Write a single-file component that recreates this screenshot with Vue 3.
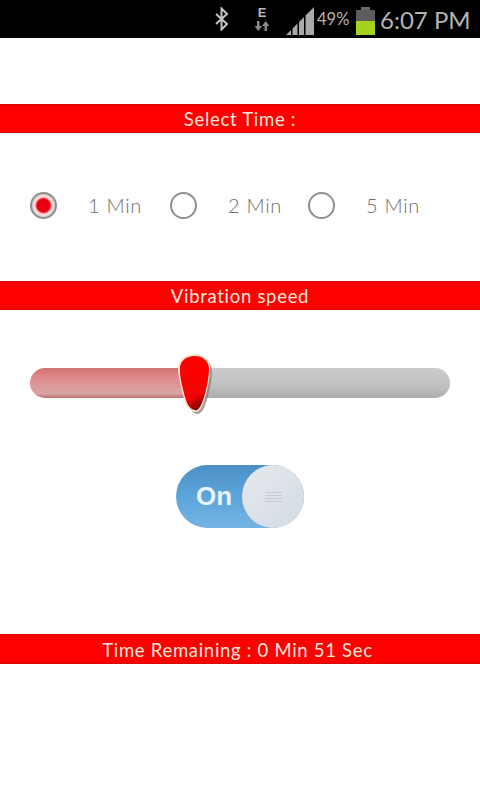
<script setup>
import { ref } from 'vue';

const TIMES = [1, 2, 5];
const selected = ref(1);
const isOn = ref(true);
</script>

<template>
  <div class="screen">
    <div class="status">
      <svg class="bt" width="16" height="24" viewBox="0 0 16 24" fill="none" stroke="#c4c4c4" stroke-width="2">
        <path d="M2 7l11 10-5.500 5.500V1.500L13 7 2 17" />
      </svg>
      <div class="data">
        <span class="data-e">E</span>
        <svg width="16" height="10" viewBox="0 0 16 10" fill="#8a8a8a">
          <path d="M3 0h2.500v5H8L4.250 10 .5 5H3zM10.500 10h2.500V5h2.500L11.750 0 8 5h2.500z" />
        </svg>
      </div>
      <svg class="signal" width="29" height="29" viewBox="0 0 29 29" fill="#aaa">
        <path d="M0 29l5-5v5zM6.500 29V22.500l5-5V29zM13 29V16l5-5v18zM19.500 29V9.500L28 1v28z" />
      </svg>
      <span class="pct">49%</span>
      <div class="battery">
        <i class="battery-cap"></i>
        <i class="battery-empty"></i>
        <i class="battery-full"></i>
      </div>
      <span class="clock">6:07 PM</span>
    </div>

    <div class="band select-band">Select Time :</div>

    <div class="radios">
      <label v-for="t in TIMES" :key="t" class="radio" @click="selected = t">
        <span class="dot" :class="{ active: selected === t }"></span>
        <span class="radio-label">{{ t }} Min</span>
      </label>
    </div>

    <div class="band speed-band">Vibration speed</div>

    <div class="slider">
      <div class="track-fill"></div>
      <div class="track-rest"></div>
      <svg class="thumb" width="38" height="62" viewBox="0 0 38 62">
        <defs>
          <linearGradient id="thumbRed" x1="0.35" y1="0" x2="0.65" y2="1">
            <stop offset="0" stop-color="#ff0000" />
            <stop offset="0.72" stop-color="#f50000" />
            <stop offset="1" stop-color="#6e0000" />
          </linearGradient>
        </defs>
        <path d="M8 20C8 10 14 5 22 5c9 0 14 6 14 13 0 11-4 28-8 37-2 4-4 6-7 6-4 0-8-5-10-13C9 40 8 28 8 20z" fill="#7f7f72" opacity=".7" />
        <path d="M2 18C1 7 9 1 19 1c10 0 15 7 15 15 0 11-4 28-8 37-2 4-4 6-7 6-5 0-9-5-11-13C6 38 3 26 2 18z" fill="#fbe3cc" />
        <path d="M4 18C3 8 10 3 19 3c9 0 14 6 14 13 0 10-4 28-8 36-2 4-4 6-6 5-4 0-8-5-10-13C7 36 4 26 4 18z" fill="url(#thumbRed)" />
      </svg>
    </div>

    <div class="toggle-row">
      <button class="toggle" type="button" @click="isOn = !isOn">
        <span class="toggle-text">{{ isOn ? 'On' : 'Off' }}</span>
        <span class="knob">
          <i></i><i></i><i></i><i></i>
        </span>
      </button>
    </div>

    <div class="band remain-band">Time Remaining : 0 Min 51 Sec</div>
  </div>
</template>

<style>
html,
body {
  margin: 0;
  background: #fff;
}
</style>

<style scoped>
.screen {
  width: 480px;
  height: 800px;
  overflow: hidden;
  background: #fff;
  font-family: "Lato", "Open Sans", sans-serif;
}

.status {
  height: 38px;
  background: #000;
  display: flex;
  align-items: center;
  padding-left: 214px;
  box-sizing: border-box;
  color: #b4b4b4;
}
.bt {
  margin-right: 23px;
}
.data {
  width: 18px;
  margin-right: 15px;
  display: flex;
  flex-direction: column;
  align-items: center;
  font: 700 13px/12px "Liberation Sans", sans-serif;
  color: #b8b8b8;
}
.data-e {
  margin-bottom: 2px;
}
.signal {
  margin-right: 2px;
  margin-top: 2px;
}
.pct {
  width: 39px;
  font-size: 16.500px;
}
.battery {
  width: 19px;
  height: 28px;
  margin-top: 3px;
  display: flex;
  flex-direction: column;
  align-items: center;
  margin-right: 5px;
}
.battery-cap {
  width: 9px;
  height: 3px;
  background: #6a6a6a;
}
.battery-empty {
  width: 100%;
  height: 11px;
  background: #5c5c5c;
}
.battery-full {
  width: 100%;
  height: 14px;
  background: #a4d21c;
}
.clock {
  font-size: 24px;
  font-weight: 400;
  white-space: nowrap;
  color: #b4b4b4;
}

.band {
  height: 29px;
  background: #f00;
  border-top: 1px solid #d80808;
  border-bottom: 1px solid #d80808;
  box-sizing: border-box;
  color: #fbe6dc;
  font-size: 18.500px;
  letter-spacing: 0.7px;
  line-height: 29px;
  text-align: center;
  white-space: nowrap;
}
.select-band {
  margin-top: 66px;
}
.speed-band {
  margin-top: 38px;
}
.remain-band {
  height: 30px;
  line-height: 31px;
  margin-top: 106px;
  padding-right: 5px;
}

.radios {
  height: 110px;
  padding: 34px 0 0 30px;
  box-sizing: border-box;
  display: flex;
  align-items: center;
}
.radio {
  display: flex;
  align-items: center;
  cursor: pointer;
  width: 140px;
}
.radio:last-child {
  margin-left: -2px;
}
.dot {
  width: 27px;
  height: 27px;
  flex: none;
  box-sizing: border-box;
  border-radius: 50%;
  border: 2px solid #8f8f8f;
  background: #fff;
}
.dot.active {
  background: radial-gradient(circle, #e8000f 0 6px, #f03040 7px, #fcd8d0 8.500px, #f6dcd8 10px, #c4c4c4 11.500px);
}
.radio-label {
  margin-left: 31px;
  font-size: 20px;
  font-weight: 300;
  color: #6e6e6e;
  letter-spacing: 0.7px;
  white-space: nowrap;
}

.slider {
  position: relative;
  margin: 58px 30px 0;
  height: 30px;
  display: flex;
  border-radius: 15px;
  overflow: visible;
}
.track-fill {
  width: 155px;
  border-radius: 15px 0 0 15px;
  background: linear-gradient(#cf7373, #e08a88 30%, #d9a3a2 85%, #b87070);
}
.track-rest {
  flex: 1;
  border-radius: 0 15px 15px 0;
  background: linear-gradient(#cbcbcb, #c0c0c0 60%, #acacac);
}
.thumb {
  position: absolute;
  left: 146px;
  top: -15px;
}

.toggle-row {
  display: flex;
  justify-content: center;
  margin-top: 67px;
}
.toggle {
  width: 128px;
  height: 63px;
  padding: 0 0 0 20px;
  border: 0;
  border-radius: 32px;
  background: linear-gradient(#4a8fc4, #5ba3da 45%, #74b4e4);
  display: flex;
  align-items: center;
  position: relative;
  cursor: pointer;
  font-family: "Liberation Sans", sans-serif;
}
.toggle-text {
  color: #e9f4fb;
  font-size: 26px;
  font-weight: 700;
}
.knob {
  position: absolute;
  right: 0;
  top: 0;
  width: 62px;
  height: 63px;
  border-radius: 50%;
  background: linear-gradient(135deg, #e6e9ed, #d3dbe4);
  display: flex;
  flex-direction: column;
  align-items: center;
  justify-content: center;
  gap: 2px;
}
.knob i {
  width: 17px;
  height: 1px;
  background: #c2cbd5;
}
</style>
